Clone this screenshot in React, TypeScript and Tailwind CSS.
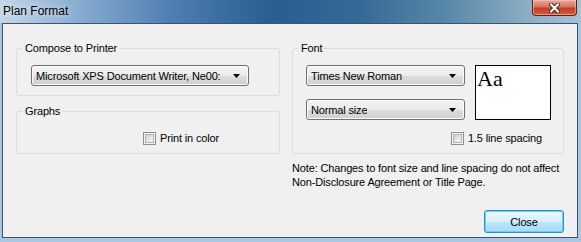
import React from 'react';

const Combo: React.FC<{ label: string; className?: string }> = ({ label, className = '' }) => (
  <div
    className={`flex h-[21px] items-center justify-between rounded-[3px] border border-[#707070] bg-[linear-gradient(to_bottom,#f3f3f3_0%,#ebebeb_50%,#dddddd_51%,#cfcfcf_100%)] pl-[4px] pr-[8px] shadow-[inset_0_0_0_1px_#fcfcfc] ${className}`}
  >
    <span className="overflow-hidden whitespace-nowrap leading-[14px]">{label}</span>
    <svg width="7" height="4" viewBox="0 0 7 4" className="shrink-0">
      <path d="M0 0h7L3.5 4z" fill="#000" />
    </svg>
  </div>
);

const Check: React.FC<{ label: string; className?: string }> = ({ label, className = '' }) => (
  <label className={`flex h-[14px] items-center gap-[4px] ${className}`}>
    <span className="block size-[13px] border border-[#8e8f8f] bg-[#f4f4f4] p-[1px]">
      <span className="block size-full border border-[#b0b4b9] bg-linear-to-br from-[#cdd1d6] to-[#f7f7f7]" />
    </span>
    <span className="leading-[14px]">{label}</span>
  </label>
);

const App: React.FC = () => {
  return (
    <div className="flex h-[242px] w-[581px] flex-col overflow-hidden bg-[#a9c6e2] font-['Liberation_Sans',Arial,sans-serif] text-[11px] tracking-[-0.15px] text-black">
      {/* Title bar */}
      <div className="flex h-[23px] items-start justify-between bg-[linear-gradient(to_right,#c4d7e8_0%,#86abcf_14%,#4d7db1_30%,#2b5c92_47%,#376996_62%,#5686a6_76%,#88abc4_90%,#a6c1d5_100%)]">
        <span className="pl-[3px] pt-[3px] text-[12px] leading-[16px] tracking-normal [text-shadow:0_0_6px_rgba(255,255,255,0.95)]">
          Plan Format
        </span>
        <button className="mr-[4px] flex h-[16px] w-[45px] items-center justify-center rounded-b-[4px] border border-t-0 border-[#5b2119] bg-[linear-gradient(to_bottom,#e9a99a_0%,#d8745f_45%,#c13f24_55%,#d45a3c_100%)] shadow-[inset_0_0_0_1px_rgba(255,210,200,0.5)]">
          <svg width="11" height="10" viewBox="0 0 11 10">
            <path d="M2 1.5l7 7M9 1.5l-7 7" stroke="#3b2b2b" strokeWidth="4" strokeLinecap="square" />
            <path d="M2 1.5l7 7M9 1.5l-7 7" stroke="#fff" strokeWidth="2" strokeLinecap="square" />
          </svg>
        </button>
      </div>

      {/* Client area */}
      <div className="ml-[2px] flex h-[215px] w-[576px] gap-[12px] border border-[#3c5470] bg-[#f0f0f0] pl-[13px] pt-[17px]">
        {/* Left column */}
        <div className="flex w-[264px] flex-col">
          <fieldset className="rounded-[3px] border border-[#d5dfe5]">
            <legend className="ml-[6px] px-[2px] leading-[14px]">Compose to Printer</legend>
            <Combo label="Microsoft XPS Document Writer, Ne00:" className="mb-[9px] ml-[14px] mt-[10px] w-[218px]" />
          </fieldset>
          <fieldset className="mt-[8px] rounded-[3px] border border-[#d5dfe5]">
            <legend className="ml-[6px] px-[2px] leading-[14px]">Graphs</legend>
            <Check label="Print in color" className="mb-[8px] mt-[13px] pl-[126px]" />
          </fieldset>
        </div>

        {/* Right column */}
        <div className="flex w-[272px] flex-col">
          <fieldset className="rounded-[3px] border border-[#d5dfe5]">
            <legend className="ml-[6px] px-[2px] leading-[14px]">Font</legend>
            <div className="mt-[10px] flex gap-[10px] pl-[13px]">
              <div className="flex w-[159px] flex-col gap-[13px]">
                <Combo label="Times New Roman" />
                <Combo label="Normal size" />
              </div>
              <div className="h-[55px] w-[76px] border border-black bg-white pl-[1px] font-['Liberation_Serif','Times_New_Roman',serif] text-[22px] leading-[25px] tracking-normal">
                Aa
              </div>
            </div>
            <Check label="1.5 line spacing" className="mb-[8px] mt-[11px] pl-[158px]" />
          </fieldset>
          <p className="mt-[7px] whitespace-nowrap leading-[14px]">
            Note: Changes to font size and line spacing do not affect
            <br />
            Non-Disclosure Agreement or Title Page.
          </p>
          <button className="mt-[21px] h-[23px] w-[80px] self-end rounded-[3px] border border-[#2c8ec9] bg-[linear-gradient(to_bottom,#eaf6fd_0%,#d9f0fc_50%,#bee6fd_51%,#a7d9f5_100%)] leading-[14px] shadow-[inset_0_0_0_1px_#62d0f7]">
            Close
          </button>
        </div>
      </div>
    </div>
  );
};

export default App;
